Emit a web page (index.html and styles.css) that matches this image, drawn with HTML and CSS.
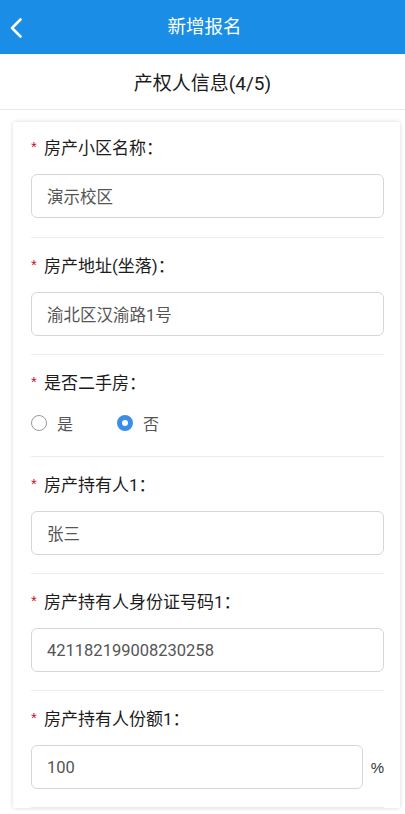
FILE: index.html
```html
<!DOCTYPE html>
<html lang="zh-CN">
<head>
<meta charset="utf-8">
<meta name="viewport" content="width=device-width, initial-scale=1">
<link rel="stylesheet" href="styles.css">
<title>新增报名</title>
</head>
<body>
<header class="topbar">
  <span class="back">
    <svg width="16" height="22" viewBox="0 0 16 22"><path d="M12.5 2.5 L4 11 L12.5 19.5" fill="none" stroke="#fff" stroke-width="2.6" stroke-linecap="round" stroke-linejoin="round"/></svg>
  </span>
  <h1 class="topbar-title">新增报名</h1>
</header>
<div class="subhead">产权人信息(4/5)</div>
<main class="card">
  <div class="field">
    <div class="label"><span class="star">*</span>房产小区名称：</div>
    <div class="input">演示校区</div>
  </div>
  <div class="field">
    <div class="label"><span class="star">*</span>房产地址(坐落)：</div>
    <div class="input">渝北区汉渝路1号</div>
  </div>
  <div class="field field-radio">
    <div class="label"><span class="star">*</span>是否二手房：</div>
    <div class="radios">
      <span class="radio"><span class="dot"></span>是</span>
      <span class="radio checked"><span class="dot"></span>否</span>
    </div>
  </div>
  <div class="field">
    <div class="label"><span class="star">*</span>房产持有人1：</div>
    <div class="input">张三</div>
  </div>
  <div class="field">
    <div class="label"><span class="star">*</span>房产持有人身份证号码1：</div>
    <div class="input">421182199008230258</div>
  </div>
  <div class="field">
    <div class="label"><span class="star">*</span>房产持有人份额1：</div>
    <div class="input-row">
      <div class="input grow">100</div>
      <span class="unit">%</span>
    </div>
  </div>
</main>
</body>
</html>
```
FILE: styles.css
```css
* { box-sizing: border-box; }
html, body { margin: 0; padding: 0; }
body {
  font-family: Roboto, "Noto Sans CJK SC", "Noto Sans", sans-serif;
  background: #fff;
  color: #1c1c1c;
  width: 405px;
  height: 814px;
  overflow: hidden;
}
.topbar {
  height: 54px;
  background: #1a8ee6;
  display: flex;
  align-items: center;
  justify-content: center;
  position: relative;
}
.back {
  position: absolute;
  left: 8px;
  top: 17px;
  display: flex;
}
.topbar-title {
  margin: 0 0 0 4px;
  font-size: 18.5px;
  font-weight: normal;
  color: #fff;
  line-height: 24px;
}
.subhead {
  height: 56px;
  display: flex;
  align-items: center;
  justify-content: center;
  font-size: 19px;
  color: #1c1c1c;
  border-bottom: 1px solid #eaeaea;
}
.card {
  margin: 12px 5px 0 13px;
  padding: 0 16px 0 18px;
  background: #fff;
  box-shadow: 0 0 4px rgba(0, 0, 0, 0.16);
  border-radius: 2px;
}
.field {
  padding: 16px 0 18px;
  border-bottom: 1px solid #ececec;
}
.field:first-child { padding-top: 14px; padding-bottom: 19px; }
.label {
  font-size: 17px;
  line-height: 24px;
  height: 24px;
  color: #1c1c1c;
  display: flex;
  align-items: center;
  margin-bottom: 14px;
}
.star {
  color: #c8101e;
  font-size: 15px;
  width: 13px;
  margin-top: -2px;
  font-family: "Liberation Sans", sans-serif;
}
.input {
  height: 44px;
  border: 1px solid #d6d6d6;
  border-radius: 6px;
  padding: 0 15px;
  display: flex;
  align-items: center;
  font-size: 16.5px;
  color: #555;
}
.input-row {
  display: flex;
  align-items: center;
}
.grow { flex: 1; }
.unit {
  width: 21px;
  text-align: right;
  font-size: 15px;
  color: #333;
  font-family: "Liberation Sans", sans-serif;
}
.field-radio .label { margin-bottom: 16px; }
.field-radio { padding-bottom: 21px; }
.radios {
  display: flex;
  align-items: center;
  height: 24px;
  gap: 44px;
}
.radio {
  display: flex;
  align-items: center;
  font-size: 16px;
  color: #555;
  gap: 10px;
}
.dot {
  width: 16px;
  height: 16px;
  border-radius: 50%;
  border: 1px solid #999;
  background: #fff;
}
.radio.checked .dot {
  border: 5px solid #3a8ee9;
  background: #fff;
}
```
